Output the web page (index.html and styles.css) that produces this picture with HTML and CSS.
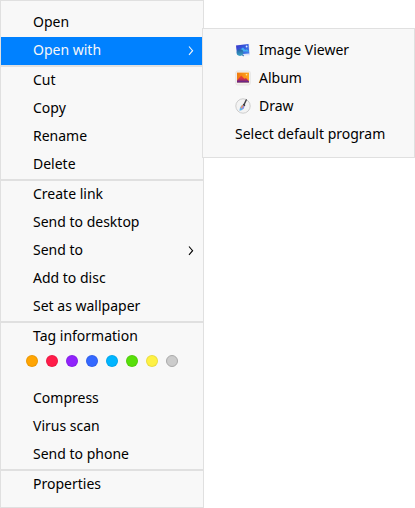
FILE: index.html
```html
<!DOCTYPE html>
<html lang="en">
<head>
<meta charset="utf-8">
<title>Context menu</title>
<link rel="stylesheet" href="styles.css">
</head>
<body>
<ul class="menu main">
  <li class="item">Open</li>
  <li class="item active">Open with
    <svg class="arrow" viewBox="0 0 6 10"><path d="M1 .5 4.6 4.7 1 8.9"/></svg>
  </li>
  <li class="separator"></li>
  <li class="item">Cut</li>
  <li class="item">Copy</li>
  <li class="item">Rename</li>
  <li class="item">Delete</li>
  <li class="separator"></li>
  <li class="item">Create link</li>
  <li class="item">Send to desktop</li>
  <li class="item">Send to
    <svg class="arrow" viewBox="0 0 6 10"><path d="M1 .5 4.6 4.7 1 8.9"/></svg>
  </li>
  <li class="item">Add to disc</li>
  <li class="item">Set as wallpaper</li>
  <li class="separator"></li>
  <li class="item">Tag information</li>
  <li class="tags">
    <span class="tag orange"></span>
    <span class="tag red"></span>
    <span class="tag purple"></span>
    <span class="tag blue"></span>
    <span class="tag cyan"></span>
    <span class="tag green"></span>
    <span class="tag yellow"></span>
    <span class="tag gray"></span>
  </li>
  <li class="item">Compress</li>
  <li class="item">Virus scan</li>
  <li class="item">Send to phone</li>
  <li class="separator"></li>
  <li class="item">Properties</li>
</ul>
<ul class="menu submenu">
  <li class="item">
    <svg class="icon" viewBox="0 0 16 16">
      <defs>
        <linearGradient id="sky" x1="0" y1="0" x2="1" y2="1"><stop offset="0" stop-color="#3b2fc4"/><stop offset=".5" stop-color="#3560e0"/><stop offset="1" stop-color="#4b83ee"/></linearGradient>
        <linearGradient id="lens" x1="0" y1="0" x2="0" y2="1"><stop offset="0" stop-color="#2560a8"/><stop offset="1" stop-color="#3aa5c4"/></linearGradient>
      </defs>
      <path d="M.8 3.2 14 1.8l1 11.4-12 .6z" fill="#dde2f6"/>
      <path d="M1 3.4 13.5 2l.8 9.6L2 12.5z" fill="url(#sky)"/>
      <path d="M4 8.5 8 5.6l2.2 2.4 1.5-.7 2.4 2.2H7z" fill="#43aff0"/>
      <circle cx="11.6" cy="4.5" r=".9" fill="#dceaff"/>
      <circle cx="5" cy="10.6" r="3.3" fill="url(#lens)"/>
      <path d="m7.4 12.8 1.3 1.2" stroke="#3979b4" stroke-width="1.2"/>
    </svg>
    Image Viewer
  </li>
  <li class="item">
    <svg class="icon" viewBox="0 0 16 16">
      <defs>
        <linearGradient id="dusk" x1="0" y1="0" x2="1" y2="0"><stop offset="0" stop-color="#f07810"/><stop offset="1" stop-color="#ffa51c"/></linearGradient>
        <linearGradient id="peak" x1="0" y1="0" x2="0" y2="1"><stop offset="0" stop-color="#f04a20"/><stop offset=".5" stop-color="#d0304c"/><stop offset="1" stop-color="#45209d"/></linearGradient>
      </defs>
      <rect x=".7" y="1" width="14.6" height="14" rx="2" fill="#f5f0ec" stroke="#dedede" stroke-width=".7"/>
      <path d="M2 2.6h12v9.9H2z" fill="url(#dusk)"/>
      <path d="M2 10.5 6.2 5.6l3.2 3.2 1.6-.8 3 3.2v1.3H2z" fill="url(#peak)"/>
      <circle cx="11.5" cy="4.8" r=".8" fill="#ffe5a8"/>
    </svg>
    Album
  </li>
  <li class="item">
    <svg class="icon" viewBox="0 0 16 16">
      <circle cx="8" cy="8" r="7.2" fill="#f3f3f3" stroke="#cdcdcd"/>
      <path d="M4.5 12.8C4.6 10.3 5.4 8 7.5 6.8l1.8 1.5c.1 2.4-1.8 4.3-4.8 4.5z" fill="#62b4ee"/>
      <path d="M5.5 9.4 7.5 6.8l.8.7-1.4 3z" fill="#f4935e"/>
      <path d="m8.3 7.5 1 .8c0 1-.4 2-1.2 2.8l-1.2-.6z" fill="#9b87dc"/>
      <path d="m8.9 6.9 2.4-5" stroke="#404046" stroke-width="1.3" stroke-linecap="round"/>
      <path d="m8.2 6.2 1.8 1.4" stroke="#35353b" stroke-width="1.4"/>
    </svg>
    Draw
  </li>
  <li class="item">Select default program</li>
</ul>
</body>
</html>
```
FILE: styles.css
```css
* { box-sizing: border-box; }

body {
  margin: 0;
  background: #fff;
  color: #000;
  font: 14px/20px "Noto Sans", sans-serif;
  overflow: hidden;
}

.menu {
  margin: 0;
  padding: 8px 0;
  list-style: none;
  background: #f8f8f8;
  border: 1px solid #e0e0e0;
}

.main { width: 204px; }

.submenu {
  position: absolute;
  left: 202px;
  top: 28px;
  width: 213px;
}

.item {
  display: flex;
  align-items: center;
  height: 28px;
  padding: 0 9px 2px 32px;
  white-space: nowrap;
}

.active {
  background: #0081ff;
  color: #f7f7f7;
}

.arrow {
  width: 6px;
  height: 10px;
  margin: 2px 0 0 auto;
  fill: none;
  stroke: currentColor;
  stroke-width: 1.1;
}

.icon {
  width: 16px;
  height: 16px;
  margin-right: 8px;
}

.separator {
  height: 2px;
  background: #e0e0e0;
}

.tags {
  display: flex;
  gap: 8px;
  height: 34px;
  padding: 4px 0 0 25px;
}

.tag {
  width: 12px;
  height: 12px;
  border: 1px solid rgb(0 0 0 / 8%);
  border-radius: 50%;
}

.orange { background: #ffa503; }
.red { background: #ff1c49; }
.purple { background: #9023fc; }
.blue { background: #3468ff; }
.cyan { background: #00b5ff; }
.green { background: #58df0a; }
.yellow { background: #fef144; }
.gray { background: #cccccc; border-color: #aaa; }
```
